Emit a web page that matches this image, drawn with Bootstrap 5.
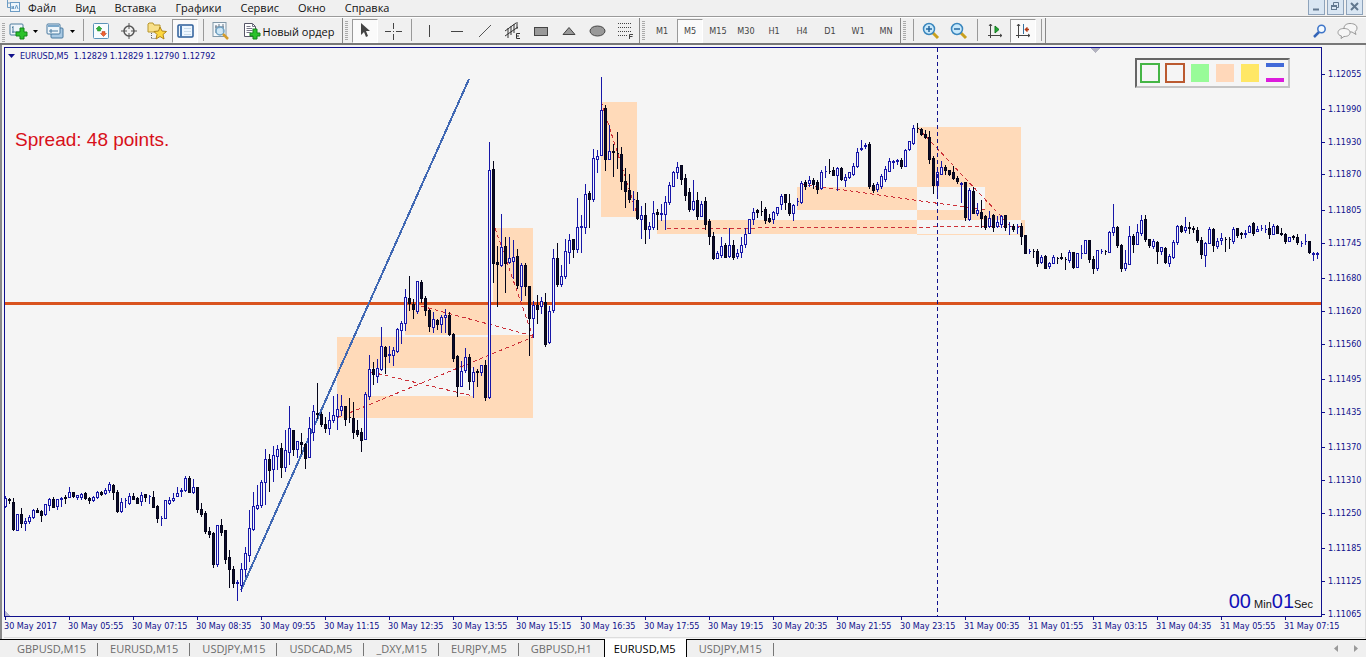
<!DOCTYPE html>
<html lang="ru">
<head>
<meta charset="utf-8">
<meta name="viewport" content="width=device-width, initial-scale=1">
<title>EURUSD,M5</title>
<link href="https://cdn.jsdelivr.net/npm/bootstrap@5.3.0/dist/css/bootstrap.min.css" rel="stylesheet">
<style>
:root{--ink:#10108c;--chart:#f5f5f5;--face:#f0f0f0;--num:"DejaVu Sans Condensed","Open Sans",sans-serif}
body{background:var(--face);font-family:"Open Sans","Noto Sans",sans-serif;font-size:11px;line-height:15px;color:#111}
button{border:0;background:none;padding:0;color:inherit;font:inherit}
a{color:inherit;text-decoration:none}
.menubar{height:17px;border-bottom:1px solid #9a9a9a}
.menubar .entries{gap:19px;padding-left:8px}
.appicon{padding-left:6px;width:20px;flex:none}
.winbtns{gap:2px;padding-right:3px}
.winbtn{width:17px;height:15px;border:1px solid #8ea3bb;border-top:0;background:#d9e6f3}
.toolbar{height:28px;padding:1px 0 0 2px;border-top:1px solid #fff;border-bottom:2px solid #777}
.tool{width:28px;height:24px;display:flex;align-items:center;justify-content:center;flex:none}
.tool.frame{font-family:var(--num);font-size:9px;color:#444}
.tool.pressed{width:26px;margin:0 1px;background:#fafafa;border:1px solid #fff;border-top-color:#999;border-left-color:#999}
.tool.drop{width:37px;justify-content:flex-start;padding-left:4px;gap:5px}
.tool.order{width:107px;gap:2px;color:#111}
.divide{width:8px;height:22px;flex:none;background:linear-gradient(#999,#999) 4px 0/1px 100% no-repeat}
.edge{width:9px;height:25px;margin-top:-1px;flex:none;border-left:1px solid #888;display:flex;align-items:center;padding-left:2px}
.grip{width:3px;height:20px;flex:none;background:repeating-linear-gradient(#aaa 0 1px,transparent 1px 2px)}
.workspace{border-left:2px solid #8a8a8a;border-right:1px solid #ddd;background:var(--chart);padding:2px 0 0 2px;min-height:300px;font-family:var(--num);font-size:9px;line-height:12px;color:var(--ink)}
.plot{border:1px solid var(--ink)}
.plot>svg{position:absolute;inset:0;width:100%;height:100%}
.prices{width:43px}
.prices span{position:absolute;left:0;padding-left:6px;transform:translateY(-50%)}
.prices span::before{content:"";position:absolute;left:0;top:6px;width:3px;height:1px;background:var(--ink)}
.times{margin-right:17px;height:20px}
.times span{flex:1 1 0;white-space:nowrap;padding-top:3px;position:relative}
.times span::before{content:"";position:absolute;left:1px;top:0;width:1px;height:3px;background:var(--ink)}
.caption-row{padding:2px 0 0 3px;gap:5px}
.spread{font:19px/24px "Liberation Sans",sans-serif;color:#d8101a;padding:66px 0 0 10px}
.palette{position:absolute;top:10px;right:31px;width:155px;height:30px;border:2px solid #c4c4c4;border-top-color:#666;border-left-color:#666;padding:3px;gap:5px;display:flex}
.swatch{width:20px;height:20px;border:1px solid var(--chart)}
.swatch.outline-green{border:2px solid #45b545}
.swatch.outline-rust{border:2px solid #bb5a30}
.swatch.green{background:#98fb98}
.swatch.peach{background:#ffd8ba}
.swatch.yellow{background:#ffe766}
.swatch.bars{border-width:0 1px;background:linear-gradient(#4169d8 0 4px,transparent 4px 15px,#dc1cdc 15px 19px,transparent 19px)}
.clock{position:absolute;right:8px;bottom:2px;font-family:"Liberation Sans",sans-serif;font-size:11px;line-height:20px;color:#111}
.clock b{font-weight:400;font-size:20px;color:#1111b8}
.tabs{height:18px;border-top:1px solid #000;line-height:17px;color:#6c6c6c;padding-left:5px}
.tabs a{padding:0 12px;position:relative;white-space:nowrap}
.tabs a::after{content:"";position:absolute;right:0;top:3px;width:1px;height:13px;background:#777}
.tabs a.active{background:#fff;color:#000;margin-top:-1px;padding:1px 10px 0 9px;border-left:1px solid #000;border-right:1px solid #000}
.tabs a.active::after,.tabs a.before::after{display:none}
.foot{border-bottom:1px solid #ddd;margin-bottom:1px}
</style>
</head>
<body class="d-flex flex-column min-vh-100">
<nav class="menubar d-flex justify-content-between">
  <div class="d-flex">
    <svg class="appicon" viewBox="0 0 14 12" height="12" width="14" fill="none" stroke="#6d9cc4"><path d="M1.500 0v7.500h3M1 3h3" /><rect x="4.500" y="2.500" width="9" height="9" fill="#eef6fc"/><path d="M6 6v3l1.500-3v3M9 9l1.500-4 1.500 4"/></svg>
    <div class="entries d-flex"><a href="#">Файл</a><a href="#">Вид</a><a href="#">Вставка</a><a href="#">Графики</a><a href="#">Сервис</a><a href="#">Окно</a><a href="#">Справка</a></div>
  </div>
  <div class="winbtns d-flex">
    <button class="winbtn d-flex" aria-label="Свернуть"><svg width="15" height="14"><path d="M4 9.500h6" stroke="#62788f" stroke-width="2"/></svg></button>
    <button class="winbtn d-flex" aria-label="Восстановить"><svg width="15" height="14" fill="none" stroke="#62788f"><path d="M5.500 5V2.500h5v5H9M4 6.500h5"/><rect x="3.500" y="5.500" width="5" height="4"/></svg></button>
    <button class="winbtn d-flex" aria-label="Закрыть"><svg width="15" height="14"><path d="M4 3l7 7M11 3l-7 7" stroke="#62788f" stroke-width="2"/></svg></button>
  </div>
</nav>

<div class="toolbar d-flex" role="toolbar">
  <div class="grip mt-1"></div>
  <button class="tool drop" aria-label="Новый график"><svg width="19" height="18" viewBox="0 0 19 18"><rect x="1" y="2" width="13" height="11" rx="1" fill="#eef5fa" stroke="#4d7c9c"/><path d="M4 4v7M3 10h9M4 5l-1 1M12 10l-1-1" stroke="#4d7c9c" fill="none"/><path d="M11 6h4v4h3v4h-3v3h-4v-3H7v-4h4z" fill="#2bc22b" stroke="#14851b"/></svg><svg width="5" height="3"><path d="M0 0h5L2.500 3z"/></svg></button>
  <button class="tool drop" aria-label="Профили"><svg width="19" height="18" viewBox="0 0 19 18"><rect x="5" y="6" width="12" height="10" rx="1" fill="#a9c9e3" stroke="#47789f"/><rect x="1" y="2" width="13" height="10" rx="1" fill="#eef5fa" stroke="#47789f"/><path d="M2 4h11" stroke="#7aa8cb" stroke-width="2"/><path d="M3 9h9M5 7v4" stroke="#47789f"/></svg><svg width="5" height="3"><path d="M0 0h5L2.500 3z"/></svg></button>
  <div class="divide"></div>
  <button class="tool" aria-label="Обзор рынка"><svg width="16" height="16"><rect x=".5" y=".5" width="15" height="15" rx="1" fill="#f8fcff" stroke="#5b93b9"/><path d="M6 3l3 3H7.500v2h-3V6H3z" fill="#31b33a" stroke="#14851b" stroke-width=".5"/><path d="M10.500 13.500l3-3H12v-2H9v2H7.500z" fill="#f06030" stroke="#b33b14" stroke-width=".5"/></svg></button>
  <button class="tool" aria-label="Окно данных"><svg width="16" height="16" fill="none" stroke="#555"><circle cx="8" cy="8" r="5" stroke-width="1.500"/><path d="M8 0v6M8 10v6M0 8h6M10 8h6"/></svg></button>
  <button class="tool" aria-label="Навигатор"><svg width="20" height="18" viewBox="0 0 20 18"><path d="M1 2l1-1h4l1 2h6v7H1z" fill="#f8e08a" stroke="#b8962c"/><path d="M4.500 11v6M4.500 16.500H9" stroke="#666" stroke-dasharray="1 1"/><path d="M13 5l2 4 4.500.5-3.500 3 1 4.500-4-2.500L9 17l1-4.500-3-3 4.500-.5z" fill="#fdd73e" stroke="#b08418"/></svg></button>
  <button class="tool pressed" aria-label="Терминал"><svg width="17" height="15"><rect x="1" y="1" width="15" height="12" rx="1" fill="#eef7ff" stroke="#2c5d99" stroke-width="1.500"/><path d="M4 2v11" stroke="#4878b0" stroke-width="2"/><path d="M7 4.500h7M7 7.500h7M7 10.500h7" stroke="#c9dbea"/></svg></button>
  <div class="divide"></div>
  <button class="tool" aria-label="Тестер стратегий"><svg width="18" height="18"><rect x="1" y=".5" width="13" height="14" fill="#f4f8fb" stroke="#8198a8"/><path d="M4 3v8M7 2v5M11 2v8M3 5h9" stroke="#678"/><circle cx="8" cy="9" r="4" fill="#c6e4f6cc" stroke="#6fa1c2" stroke-width="1.500"/><path d="M11 12l5 5" stroke="#d39c2c" stroke-width="2.500"/></svg></button>
  <button class="tool order"><svg width="18" height="18" viewBox="0 0 18 18"><path d="M1.500 1.500h8l3 3v10h-11z" fill="#fff" stroke="#556"/><path d="M9.500 1.500v3h3M3.500 6.500h6M3.500 8.500h6M3.500 10.500h4M3.500 4.500h4" stroke="#778" fill="none"/><path d="M10 7h4v4h3v3h-3v3h-4v-3H7v-3h3z" fill="#2bc22b" stroke="#14851b"/></svg><span>Новый ордер</span></button>
  <div class="edge"><div class="grip"></div></div>
  <button class="tool pressed" aria-label="Курсор"><svg width="12" height="16"><path d="M2 0v12l3-3 2 5 2-1-2-5h4z" fill="#444"/></svg></button>
  <button class="tool" aria-label="Перекрестие"><svg width="17" height="17" stroke="#444"><path d="M8.500 0v6M8.500 11v6M0 8.500h6M11 8.500h6M8 8.500h1"/></svg></button>
  <div class="divide"></div>
  <button class="tool" aria-label="Вертикальная линия"><svg width="15" height="14" stroke="#444"><path d="M7.500 1v12"/></svg></button>
  <button class="tool" aria-label="Горизонтальная линия"><svg width="14" height="14" stroke="#444"><path d="M1 7.500h12"/></svg></button>
  <button class="tool" aria-label="Трендовая линия"><svg width="14" height="14" stroke="#555"><path d="M1 13L13 1"/></svg></button>
  <button class="tool" aria-label="Канал"><svg width="18" height="18" stroke="#333" fill="none"><path d="M1 9L12 1M1 14L14 5M4 6v10M7 4v9M10 2v9M13 0v7"/><path d="M16 11.500h-3.500v5H16M12.500 14H15"/></svg></button>
  <button class="tool" aria-label="Прямоугольник"><svg width="14" height="11"><rect x=".5" y="1.500" width="13" height="8" fill="#999" stroke="#444"/></svg></button>
  <button class="tool" aria-label="Треугольник"><svg width="14" height="10"><path d="M1 8.500L7 1.500l6 7z" fill="#999" stroke="#444"/></svg></button>
  <button class="tool" aria-label="Эллипс"><svg width="17" height="12"><ellipse cx="8.500" cy="6" rx="7.500" ry="5" fill="#999" stroke="#444"/></svg></button>
  <button class="tool" aria-label="Фибоначчи"><svg width="16" height="18" stroke="#444" fill="none"><path d="M1 1.500h14M1 5.500h14M1 9.500h14M1 13.500h9" stroke-dasharray="1 1"/><path d="M12.500 17v-4.500H16M12.500 14.500h3"/></svg></button>
  <div class="edge"><div class="grip"></div></div>
  <button class="tool frame">M1</button><button class="tool frame pressed">M5</button><button class="tool frame">M15</button><button class="tool frame">M30</button><button class="tool frame">H1</button><button class="tool frame">H4</button><button class="tool frame">D1</button><button class="tool frame">W1</button><button class="tool frame">MN</button>
  <div class="edge"><div class="grip"></div></div>
  <div class="divide"></div>
  <button class="tool" aria-label="Увеличить"><svg width="18" height="18"><path d="M10 10l6 6" stroke="#c9a01e" stroke-width="3"/><circle cx="7" cy="7" r="5.500" fill="#c9e9fb" stroke="#3a86bd" stroke-width="1.500"/><path d="M4 7h6M7 4v6" stroke="#2467a0" stroke-width="1.500"/></svg></button>
  <button class="tool" aria-label="Уменьшить"><svg width="18" height="18"><path d="M10 10l6 6" stroke="#c9a01e" stroke-width="3"/><circle cx="7" cy="7" r="5.500" fill="#c9e9fb" stroke="#3a86bd" stroke-width="1.500"/><path d="M4 7h6" stroke="#2467a0" stroke-width="1.500"/></svg></button>
  <div class="divide"></div>
  <button class="tool" aria-label="Автопрокрутка"><svg width="16" height="16" stroke="#444" fill="none"><path d="M3.500 1v14M1 12.500h14M2 3l1.500-2L5 3M13 11l2 1.500-2 1.500"/><path d="M8 3v7l4-3.500z" fill="#22a832" stroke="#137a20"/></svg></button>
  <button class="tool pressed" aria-label="Сдвиг графика"><svg width="16" height="16" stroke="#444" fill="none"><path d="M3.500 1v14M1 12.500h14M2 3l1.500-2L5 3M13 11l2 1.500-2 1.500"/><path d="M8.500 1v10" stroke="#3370a0"/><path d="M14 6.500h-3M12.500 4.500l-2 2 2 2" stroke="#b23a16" stroke-width="1.500"/></svg></button>
  <div class="divide"></div>
  <div class="edge"></div>
  <div class="ms-auto d-flex pe-1">
    <button class="tool" aria-label="Поиск"><svg width="14" height="14"><path d="M6 8l-5 5" stroke="#3465b8" stroke-width="2.500"/><circle cx="8.500" cy="5" r="3.700" fill="#f4faff" stroke="#3d74c8" stroke-width="1.500"/></svg></button>
    <button class="tool" aria-label="Чат"><svg width="22" height="16" fill="#f6f6f6" stroke="#999"><path d="M13 .500c4 0 7 1.500 7 4.500 0 2-1 3-2 3.500l1 3-4-2.500c-6 0-8-1-8-4s3-4.500 6-4.500z"/><path d="M7 5.500c3.500 0 6 1.500 6 4s-2 4-6 4l-3 2 .5-2.500C2 12.500 1 11 1 9.500c0-2.500 2.500-4 6-4z"/></svg></button>
  </div>
</div>

<main class="workspace flex-grow-1 d-flex flex-column">
  <div class="d-flex flex-grow-1">
    <section class="plot position-relative flex-grow-1">
      <svg viewBox="5 48 1316 568" preserveAspectRatio="none" shape-rendering="crispEdges" role="img" aria-label="EURUSD M5">
        <path fill="#ffdab9" fill-rule="evenodd" d="M337 337H533V418H337zM369 368H473V396H369zM405 304H489V335H405zM489 335H533V337H489zM493 228H533V303H493zM601 102H637V217H601zM657 220H917V234H657zM797 187H917V210H797zM917 127H1021V220H917zM917 187H985V210H917zM1021 220H1025V235H1021zM917 234H1021V235H917z"/>
        <path d="M5 303.500H1321" stroke="#d9531f" stroke-width="3"/>
        <path d="M241 590L469 79" stroke="#4169b4" stroke-width="2" fill="none"/>
        <path d="M337 418L533 337M421 306L533 336M371 372L473 396M495 228L533 337M601 101L637 214M667 228.500L1021 226.500M801 184L985 210M917 127L1012 228" stroke="#cc3038" stroke-dasharray="4 3" fill="none"/>
        <path id="fallWicks" stroke="#05051a"/><path id="riseWicks" stroke="#1717a8"/>
        <path id="fallBodies" fill="#0c0c2c" stroke="#05051a"/><path id="riseBodies" fill="#f4f4ff" stroke="#1717a8"/>
        <path d="M937.500 48V616" stroke="#10108c" stroke-dasharray="4 3"/>
        <path d="M1091 48h9l-4.500 5z" fill="#b4b4c0"/><path d="M5 611v5h5z" fill="#b4b4d0"/>
      </svg>
      <div class="caption-row position-relative d-flex align-items-center"><svg width="7" height="4"><path d="M0 0h7L3.500 4z" fill="#10108c"/></svg><span>EURUSD,M5&nbsp; 1.12829 1.12829 1.12790 1.12792</span></div>
      <div class="spread position-relative">Spread: 48 points.</div>
      <div class="palette">
        <div class="swatch outline-green"></div><div class="swatch outline-rust"></div><div class="swatch green"></div><div class="swatch peach"></div><div class="swatch yellow"></div><div class="swatch bars"></div>
      </div>
      <div class="clock"><b>00</b> Min<b>01</b>Sec</div>
    </section>
    <div class="prices position-relative" id="prices"></div>
  </div>
  <div class="times d-flex" id="times"></div>
  <div class="foot"></div>
</main>

<nav class="tabs d-flex">
  <a href="#">GBPUSD,M15</a><a href="#">EURUSD,M15</a><a href="#">USDJPY,M15</a><a href="#">USDCAD,M5</a><a href="#">_DXY,M15</a><a href="#">EURJPY,M5</a><a href="#" class="before">GBPUSD,H1</a><a href="#" class="active">EURUSD,M5</a><a href="#">USDJPY,M15</a>
  <div class="ms-auto d-flex align-items-center gap-3 pe-2"><svg width="4" height="7"><path d="M4 0v7L0 3.500z" fill="#999"/></svg><svg width="4" height="7"><path d="M0 0v7l4-3.500z" fill="#999"/></svg></div>
</nav>

<script src="https://cdn.jsdelivr.net/npm/bootstrap@5.3.0/dist/js/bootstrap.bundle.min.js"></script>
<script>
// one candle per entry: direction, high, body top, body bottom, low
const candles = `u496 498 506 507,d498 499 500 503,d498 502 529 530,u514 514 530 530,d508 514 523 527,u518 521 523 530,u515 517 521 523,u509 510 517 518,d508 510 512 512,d510 511 515 521,u504 504 514 515,u498 499 505 510,d497 499 507 507,u499 499 506 509,u497 498 499 506,d495 497 498 503,u487 492 497 497,d492 492 496 497,u495 495 497 499,u493 494 497 499,d492 493 498 499,d497 498 500 503,u496 497 500 501,u491 492 497 498,d491 492 494 495,u488 490 493 494,u482 484 490 492,d484 485 492 499,d490 492 511 512,u498 502 511 512,u498 500 500 507,u493 496 503 504,d493 496 499 499,d497 498 503 503,u492 495 501 505,d494 494 497 501,u495 496 496 503,d491 497 507 507,d505 506 518 522,u516 518 518 525,u500 500 518 518,u497 500 503 504,u493 498 500 501,u487 493 496 496,u488 490 491 496,u476 478 490 491,d476 478 492 492,u479 487 492 493,d487 487 509 512,d503 509 514 516,d511 513 531 533,d527 531 534 537,d532 533 564 567,u525 525 564 566,d519 525 532 535,d530 530 559 563,d550 557 569 587,d566 569 583 587,u580 582 583 600,
u563 569 585 591,u547 553 569 576,u510 528 555 561,u492 506 529 530,u485 505 508 509,u480 482 505 507,u449 459 482 504,d454 459 470 491,u446 455 469 481,u445 449 456 469,d443 448 467 477,u430 450 467 471,u406 428 452 464,d430 430 449 455,u441 441 449 457,d433 442 444 453,d443 444 458 468,u417 428 457 457,u405 411 432 440,d383 413 414 418,d412 414 424 426,d417 424 428 432,u412 420 428 434,u396 415 420 422,u394 409 416 429,u395 406 410 415,d406 406 419 425,d398 417 417 422,d402 418 432 438,d420 430 434 436,d428 432 440 451,u392 394 439 439,u355 369 396 399,d362 369 374 384,u359 368 376 382,u327 346 369 370,d346 347 356 373,u346 354 355 362,u347 350 355 365,u328 329 351 352,u321 323 330 343,u289 297 323 330,d276 298 303 310,d299 304 309 318,u281 281 311 313,d280 282 298 302,d296 298 310 315,d309 310 326 331,u312 319 327 332,d319 320 324 329,u315 317 324 332,u309 315 317 332,d312 315 334 335,d333 334 358 361,d355 356 386 396,u361 371 386 386,u348 357 370 372,d354 357 381 389,u367 372 381 397,d369 371 372 386,u365 365 372 375,d360 365 397 400,u142 170 397 398,
d161 169 263 282,d246 262 264 306,u214 247 265 266,d237 246 263 292,u237 258 262 263,u240 257 261 278,d249 256 285 288,u263 265 286 300,d263 265 286 295,d286 286 318 355,u301 305 318 337,d295 305 309 323,u297 301 306 313,d293 302 344 346,u306 311 342 343,u249 258 310 312,d243 258 284 286,u265 276 284 286,u239 251 276 278,u234 240 252 263,d239 239 249 257,u198 227 249 252,u215 226 227 252,u184 194 227 233,d191 193 199 227,u149 158 199 201,u150 156 159 172,u77 110 155 155,d105 108 159 170,u125 151 159 159,d144 151 152 176,d132 153 153 168,d147 154 181 189,d168 181 191 207,d174 190 199 202,u191 199 199 210,d192 200 218 219,u206 215 219 238,d203 215 229 243,u222 226 229 238,u201 213 227 229,d209 212 214 229,u204 213 214 220,u196 202 214 229,u182 185 202 204,u171 172 186 186,u162 167 172 178,d165 165 179 184,d174 178 195 200,d188 192 209 211,u180 201 209 210,d192 200 216 219,u201 204 216 216,d197 201 224 229,d219 221 236 244,
d232 236 258 259,u251 253 258 258,u237 246 255 257,d243 245 257 257,u228 245 256 257,d240 245 257 259,u249 253 256 258,u237 245 252 257,u228 234 244 247,u219 219 233 233,u208 212 219 224,d209 210 212 217,d201 211 211 215,d207 209 220 223,d214 218 221 222,u211 212 219 223,u207 207 213 215,u194 196 204 209,d194 194 202 209,d194 203 213 215,u204 205 213 220,u198 201 201 205,u181 183 202 203,d180 182 186 189,u176 180 183 186,d178 180 184 188,d180 182 189 193,u170 172 188 189,u166 171 171 177,d159 171 171 173,d167 170 175 175,u167 168 175 190,d167 168 179 180,u174 177 180 186,u172 172 177 178,u163 166 174 175,u148 152 166 167,u140 148 149 150,u143 145 146 148,d142 144 186 188,d183 185 190 192,u182 184 189 191,u174 176 186 188,u166 169 179 181,u158 161 171 171,u160 161 162 168,u159 160 161 164,d158 160 166 168,u149 150 166 166,u141 141 149 150,u125 128 143 144,
d123 128 128 132,d128 129 134 135,d130 134 137 138,d131 137 159 163,d156 158 185 193,u170 172 185 196,u161 167 174 174,d165 167 170 174,d170 170 174 175,d166 172 178 179,d176 178 181 183,u182 183 184 202,d182 182 217 220,u188 190 219 220,d187 191 213 213,u203 210 213 215,d200 212 218 227,d215 216 227 229,u211 218 226 227,d214 215 227 231,u216 222 226 227,u215 216 224 227,d215 215 227 230,u222 226 226 234,d224 226 229 231,u224 227 227 233,d223 226 236 244,d235 235 253 253,u249 251 251 253,d249 251 251 257,d249 251 263 266,u255 257 262 263,d255 256 268 268,u262 263 266 268,u255 257 263 263,d257 258 258 263,d253 257 258 259,d257 259 259 269,u250 252 260 262,d252 252 267 268,u253 253 267 267,u245 253 253 258,u240 240 253 253,d240 240 259 262,d256 259 268 273,u250 250 268 270,u249 251 251 253,d250 251 251 254,u231 232 252 252,u204 227 232 235,d226 227 245 247,d244 245 268 271,u250 263 268 270,u226 236 264 264,d234 236 244 252,u224 232 244 244,u215 220 233 235,d215 219 239 241,d239 239 245 247,u239 241 246 248,d241 242 251 263,
u247 247 251 254,d247 248 262 263,u254 256 263 266,u240 242 257 258,u225 226 242 244,d225 226 231 232,u217 227 230 232,d222 227 228 233,d226 228 229 232,d227 230 240 242,d237 240 254 258,u242 243 255 266,u227 229 243 243,d228 229 245 251,u238 241 246 248,u233 238 240 244,d237 239 239 251,d237 239 239 248,u227 229 241 243,d228 228 235 237,d232 233 234 238,u230 233 234 237,u225 226 232 232,d222 223 233 235,u226 229 231 231,u225 228 228 230,u225 229 229 232,d222 228 234 238,u224 226 234 234,d225 226 233 233,d228 233 234 235,d233 234 241 243,u237 237 241 241,d235 236 237 239,d234 237 242 244,u241 243 243 246,u234 241 241 244,d241 241 252 253,u252 253 254 260,u252 253 254 258`.split(',');
const wicks = {u: '', d: ''}, bodies = {u: '', d: ''};
candles.forEach((entry, i) => {
  const c = entry.trim(), side = c[0], [high, top, bottom, low] = c.slice(1).split(' ').map(Number);
  const x = 5 + i * 4;
  wicks[side] += `M${x + .5} ${high}V${low + 1}`;
  bodies[side] += `M${x - .5} ${top + .5}H${x + 1.5}V${bottom + .5}H${x - .5}z`;
});
document.getElementById('riseWicks').setAttribute('d', wicks.u);
document.getElementById('fallWicks').setAttribute('d', wicks.d);
document.getElementById('riseBodies').setAttribute('d', bodies.u);
document.getElementById('fallBodies').setAttribute('d', bodies.d);

const scale = [12055,11990,11930,11870,11805,11745,11680,11620,11560,11495,11435,11370,11310,11250,11185,11125,11065];
document.getElementById('prices').innerHTML = scale.map(p =>
  `<span style="top:${((12055 - p) * 540 / 990 + 26.5) / 5.7}%">1.${p}</span>`).join('');
const stamps = ['30 May 2017','30 May 05:55','30 May 07:15','30 May 08:35','30 May 09:55','30 May 11:15','30 May 12:35','30 May 13:55','30 May 15:15','30 May 16:35','30 May 17:55','30 May 19:15','30 May 20:35','30 May 21:55','30 May 23:15','31 May 00:35','31 May 01:55','31 May 03:15','31 May 04:35','31 May 05:55','31 May 07:15'];
document.getElementById('times').innerHTML = stamps.map(s => `<span>${s}</span>`).join('');
</script>
</body>
</html>
